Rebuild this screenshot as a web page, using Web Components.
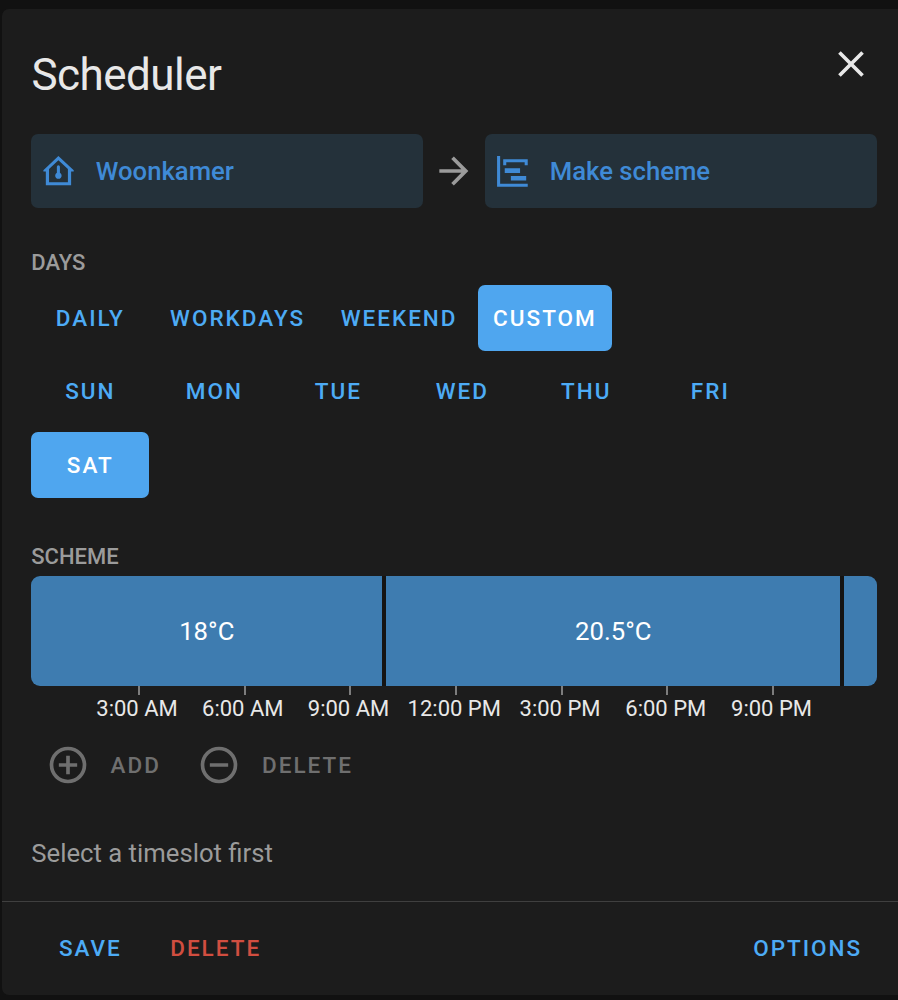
<!DOCTYPE html>
<html lang="en">
<head>
<meta charset="utf-8">
<title>Scheduler</title>
<style>
  html {
    background: #111111;
  }

  body {
    margin: 0;
    height: 1000px;
    box-sizing: border-box;
    padding: 9px 0 5.5px 2px;
    overflow: hidden;
    font-family: Roboto, "Liberation Sans", sans-serif;
    --primary-color: #4dabf5;
    --active-background: #4fa6ef;
    --primary-text-color: #e8e8e8;
    --secondary-text-color: #9b9b9b;
    --disabled-text-color: #6f6f6f;
    --error-color: #d14e40;
    --card-background: #1c1c1c;
  }
</style>
</head>
<body>
<scheduler-card heading="Scheduler">
  <entity-row slot="content">
    <scheduler-chip icon="home">Woonkamer</scheduler-chip>
    <scheduler-icon name="arrow" size="44"></scheduler-icon>
    <scheduler-chip icon="timeline">Make scheme</scheduler-chip>
  </entity-row>

  <scheduler-section slot="content" heading="Days" style="--section-height: 294px">
    <button-group style="margin-top: 8.5px">
      <scheduler-button>Daily</scheduler-button>
      <scheduler-button>Workdays</scheduler-button>
      <scheduler-button>Weekend</scheduler-button>
      <scheduler-button active>Custom</scheduler-button>
    </button-group>
    <button-group style="margin-top: 7.5px">
      <scheduler-button>Sun</scheduler-button>
      <scheduler-button>Mon</scheduler-button>
      <scheduler-button>Tue</scheduler-button>
      <scheduler-button>Wed</scheduler-button>
      <scheduler-button>Thu</scheduler-button>
      <scheduler-button>Fri</scheduler-button>
      <scheduler-button active>Sat</scheduler-button>
    </button-group>
  </scheduler-section>

  <scheduler-section slot="content" heading="Scheme" style="--section-height: 333px">
    <time-scheme style="margin-top: 5.5px"></time-scheme>
    <button-group style="margin-top: 10px; --group-gap: 7px">
      <scheduler-button icon="plus" disabled>Add</scheduler-button>
      <scheduler-button icon="minus" disabled>Delete</scheduler-button>
    </button-group>
  </scheduler-section>

  <span slot="content">Select a timeslot first</span>

  <scheduler-button slot="actions">Save</scheduler-button>
  <scheduler-button slot="actions" warning>Delete</scheduler-button>
  <scheduler-button slot="options">Options</scheduler-button>
</scheduler-card>

<script>
const icons = {
  close: 'M19,6.41L17.59,5L12,10.59L6.41,5L5,6.41L10.59,12L5,17.59L6.41,19L12,13.41L17.59,19L19,17.59L13.41,12L19,6.41Z',
  arrow: 'M4,11V13H16L10.5,18.5L11.92,19.92L19.84,12L11.92,4.08L10.5,5.5L16,11H4Z',
  home: 'M12,2L2.2,11.3V12H3.8V21H20.3V12H22V11.3L12,2M12,4.7L18.2,10.5V19H5.9V10.5L12,4.7M12,8A1,1 0 0,0 11,9V12.9A2.1,2.1 0 1,0 13,12.9V9A1,1 0 0,0 12,8Z',
  timeline: 'M2,2H4V20H22V22H2V2M7,10H17V13H7V10M11,15H21V18H11V15M6,4H22V8H20V6H8V8H6V4Z',
  plus: 'M12,20C7.59,20 4,16.41 4,12C4,7.59 7.59,4 12,4C16.41,4 20,7.59 20,12C20,16.41 16.41,20 12,20M12,2A10,10 0 0,0 2,12A10,10 0 0,0 12,22A10,10 0 0,0 22,12A10,10 0 0,0 12,2M13,7H11V11H7V13H11V17H13V13H17V11H13V7Z',
  minus: 'M12,20C7.59,20 4,16.41 4,12C4,7.59 7.59,4 12,4C16.41,4 20,7.59 20,12C20,16.41 16.41,20 12,20M12,2A10,10 0 0,0 2,12A10,10 0 0,0 12,22A10,10 0 0,0 22,12A10,10 0 0,0 12,2M7,13H17V11H7V13Z'
}

class SchedulerIcon extends HTMLElement {
  constructor() {
    super()
    this.attachShadow({ mode: 'open' })
  }

  connectedCallback() {
    const size = this.getAttribute('size') || '44'

    this.shadowRoot.innerHTML = `
      <style>
        :host {
          display: block;
          flex: none;
          width: ${size}px;
          height: ${size}px;
        }

        svg {
          display: block;
          width: 100%;
          height: 100%;
          fill: currentColor;
          fill-rule: evenodd;
        }
      </style>
      <svg viewBox="0 0 24 24"><path d="${icons[this.getAttribute('name')]}"/></svg>
    `
  }
}

class SchedulerCard extends HTMLElement {
  constructor() {
    super()
    this.attachShadow({ mode: 'open' })
  }

  connectedCallback() {
    this.shadowRoot.innerHTML = `
      <style>
        :host {
          display: flex;
          flex-direction: column;
          height: 100%;
          box-sizing: border-box;
          background: var(--card-background);
          border-radius: 7px 0 0 7px;
          color: var(--secondary-text-color);
          font-size: 25.7px;
          line-height: 36px;
        }

        header {
          display: flex;
          justify-content: space-between;
          height: 125px;
          padding: 33.4px 24.6px 0 29.4px;
          box-sizing: border-box;
          color: var(--primary-text-color);
        }

        h1 {
          margin: 0;
          font-size: 44px;
          font-weight: 400;
          line-height: 66px;
          letter-spacing: -0.53px;
        }

        main {
          flex: 1;
          padding: 0 20.8px 0 29.3px;
        }

        footer {
          display: flex;
          align-items: center;
          height: 92.5px;
          padding: 0 21px 0 29.4px;
          border-top: 1.5px solid #3f3f3f;
          gap: 6px;
        }

        .spacer {
          flex: 1;
        }
      </style>
      <header>
        <h1>${this.getAttribute('heading')}</h1>
        <scheduler-icon name="close" size="44"></scheduler-icon>
      </header>
      <main><slot name="content"></slot></main>
      <footer>
        <slot name="actions"></slot>
        <div class="spacer"></div>
        <slot name="options"></slot>
      </footer>
    `
  }
}

class EntityRow extends HTMLElement {
  constructor() {
    super()
    this.attachShadow({ mode: 'open' }).innerHTML = `
      <style>
        :host {
          display: flex;
          align-items: center;
          gap: 9px;
        }
      </style>
      <slot></slot>
    `
  }
}

class SchedulerChip extends HTMLElement {
  constructor() {
    super()
    this.attachShadow({ mode: 'open' })
  }

  connectedCallback() {
    this.shadowRoot.innerHTML = `
      <style>
        :host {
          display: flex;
          flex: 1;
          align-items: center;
          gap: 18.5px;
          height: 74px;
          box-sizing: border-box;
          padding: 0 9.2px;
          border-radius: 7px;
          background: #24313a;
          color: #3f8ad6;
          font-weight: 500;
        }
      </style>
      <scheduler-icon name="${this.getAttribute('icon')}" size="36.8"></scheduler-icon>
      <slot></slot>
    `
  }
}

class SchedulerSection extends HTMLElement {
  constructor() {
    super()
    this.attachShadow({ mode: 'open' })
  }

  connectedCallback() {
    this.shadowRoot.innerHTML = `
      <style>
        :host {
          display: block;
          height: var(--section-height);
          box-sizing: border-box;
          padding-top: 41px;
        }

        h2 {
          margin: 0;
          font-size: 22px;
          font-weight: 500;
          line-height: 27px;
          text-transform: uppercase;
        }
      </style>
      <h2>${this.getAttribute('heading')}</h2>
      <slot></slot>
    `
  }
}

class ButtonGroup extends HTMLElement {
  constructor() {
    super()
    this.attachShadow({ mode: 'open' }).innerHTML = `
      <style>
        :host {
          display: flex;
          flex-wrap: wrap;
          width: 780px;
          gap: 7.5px var(--group-gap, 6px);
        }
      </style>
      <slot></slot>
    `
  }
}

class SchedulerButton extends HTMLElement {
  constructor() {
    super()
    this.attachShadow({ mode: 'open' })
  }

  connectedCallback() {
    const icon = this.getAttribute('icon')

    this.shadowRoot.innerHTML = `
      <style>
        :host {
          display: block;
        }

        button {
          display: flex;
          align-items: center;
          justify-content: center;
          gap: 20.5px;
          min-width: 118px;
          height: 66px;
          padding: 0 14.8px;
          border: 0;
          border-radius: 7px;
          background: none;
          color: var(--primary-color);
          font: 500 22.5px/40px Roboto, "Liberation Sans", sans-serif;
          letter-spacing: 2px;
          text-transform: uppercase;
        }

        :host([active]) button {
          background: var(--active-background);
          color: #ffffff;
        }

        :host([warning]) button {
          color: var(--error-color);
        }

        :host([disabled]) button {
          color: var(--disabled-text-color);
        }
      </style>
      <button>
        ${icon ? `<scheduler-icon name="${icon}" size="44"></scheduler-icon>` : ''}
        <span><slot></slot></span>
      </button>
    `
  }
}

class TimeScheme extends HTMLElement {
  constructor() {
    super()
    this.attachShadow({ mode: 'open' })

    const slots = [
      { width: 351, label: '18°C' },
      { width: 454, label: '20.5°C' },
      { width: 33, label: '' }
    ]
    const times = [
      '3:00 AM', '6:00 AM', '9:00 AM', '12:00 PM', '3:00 PM', '6:00 PM', '9:00 PM'
    ]

    this.shadowRoot.innerHTML = `
      <style>
        :host {
          display: block;
        }

        .bar {
          display: flex;
          justify-content: space-between;
          height: 110px;
          border-radius: 9px;
          overflow: hidden;
          background: #151413;
        }

        .bar div {
          display: flex;
          align-items: center;
          justify-content: center;
          background: #3e7cb0;
          color: #ffffff;
        }

        .ticks {
          display: flex;
          height: 9px;
          padding-left: 106.6px;
          gap: 103.7px;
        }

        .ticks i {
          width: 2px;
          background: #7d7d7d;
        }

        .times {
          display: grid;
          grid-template-columns: repeat(7, 105.75px);
          justify-content: center;
          color: var(--primary-text-color);
          font-size: 22px;
          line-height: 27px;
          text-align: center;
          white-space: nowrap;
        }
      </style>
      <div class="bar">
        ${slots.map(s => `<div style="width: ${s.width}px">${s.label}</div>`).join('')}
      </div>
      <div class="ticks">${times.map(() => '<i></i>').join('')}</div>
      <div class="times">${times.map(t => `<span>${t}</span>`).join('')}</div>
    `
  }
}

customElements.define('scheduler-icon', SchedulerIcon)
customElements.define('scheduler-card', SchedulerCard)
customElements.define('entity-row', EntityRow)
customElements.define('scheduler-chip', SchedulerChip)
customElements.define('scheduler-section', SchedulerSection)
customElements.define('button-group', ButtonGroup)
customElements.define('scheduler-button', SchedulerButton)
customElements.define('time-scheme', TimeScheme)
</script>
</body>
</html>
